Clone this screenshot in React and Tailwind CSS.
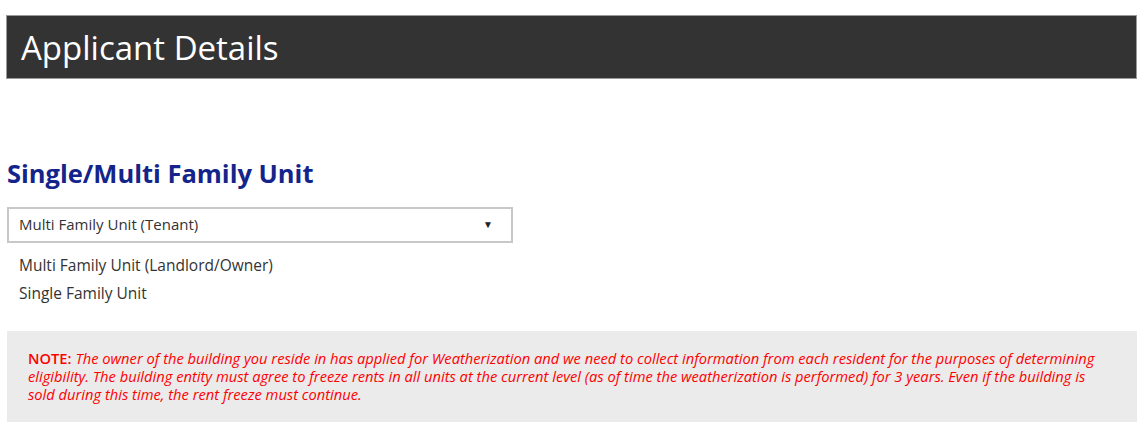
export default function App() {
  return (
    <div className="min-h-screen bg-white pt-[15px] font-['Open_Sans',sans-serif]">
      <div className="ml-[6px] mr-[10px] flex h-[64px] items-center border border-[#9a9a9a] bg-[#333333] px-[14px]">
        <h1 className="text-[33px] leading-none text-white">Applicant Details</h1>
      </div>

      <div className="px-[7px] pt-[82px]">
        <h2 className="text-[25.5px] font-bold leading-none text-[#14248a]">Single/Multi Family Unit</h2>

        <div className="mt-[20px] flex h-[36px] w-[506px] items-center justify-between border-2 border-[#c8c8c8] px-[10px] text-[15px] text-[#333]">
          <span>Multi Family Unit (Tenant)</span>
          <span className="pr-[8px] text-[10px] text-[#222]">▼</span>
        </div>

        <ul className="mt-[12px] space-y-[8px] px-[12px] text-[15.5px] leading-[20px] text-[#333]">
          <li>Multi Family Unit (Landlord/Owner)</li>
          <li>Single Family Unit</li>
        </ul>
      </div>

      <div className="ml-[7px] mr-[10px] mt-[28px] h-[91px] bg-[#ebebeb] px-[21px] pt-[18px] text-[14.7px] leading-[18px] text-[#ff0000]">
        <p>
          <span className="font-semibold">NOTE: </span>
          <span className="italic">
            The owner of the building you reside in has applied for Weatherization and we need to collect information from each resident for the purposes of determining
            <br />
            eligibility. The building entity must agree to freeze rents in all units at the current level (as of time the weatherization is performed) for 3 years. Even if the building is
            <br />
            sold during this time, the rent freeze must continue.
          </span>
        </p>
      </div>
    </div>
  )
}
